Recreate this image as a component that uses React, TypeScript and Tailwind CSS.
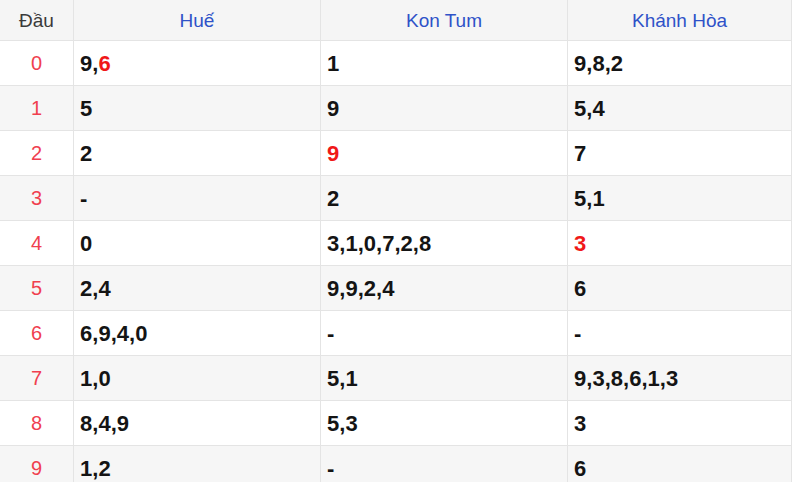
import React from "react";

type Cell = { text: string; red?: number[] };

const rows: { d: string; c: Cell[] }[] = [
  { d: "0", c: [{ text: "9,6", red: [1] }, { text: "1" }, { text: "9,8,2" }] },
  { d: "1", c: [{ text: "5" }, { text: "9" }, { text: "5,4" }] },
  { d: "2", c: [{ text: "2" }, { text: "9", red: [0] }, { text: "7" }] },
  { d: "3", c: [{ text: "-" }, { text: "2" }, { text: "5,1" }] },
  { d: "4", c: [{ text: "0" }, { text: "3,1,0,7,2,8" }, { text: "3", red: [0] }] },
  { d: "5", c: [{ text: "2,4" }, { text: "9,9,2,4" }, { text: "6" }] },
  { d: "6", c: [{ text: "6,9,4,0" }, { text: "-" }, { text: "-" }] },
  { d: "7", c: [{ text: "1,0" }, { text: "5,1" }, { text: "9,3,8,6,1,3" }] },
  { d: "8", c: [{ text: "8,4,9" }, { text: "5,3" }, { text: "3" }] },
  { d: "9", c: [{ text: "1,2" }, { text: "-" }, { text: "6" }] },
];

function renderCell(cell: Cell) {
  const parts = cell.text.split(",");
  return parts.map((p, i) => (
    <React.Fragment key={i}>
      {i > 0 && ","}
      {cell.red && cell.red.includes(i) ? <span className="text-[#f01818]">{p}</span> : p}
    </React.Fragment>
  ));
}

export default function App() {
  return (
    <div className="w-[800px] h-[482px] bg-white overflow-hidden font-['Liberation_Sans',Arial,sans-serif]">
      <div className="grid grid-cols-[74px_247px_247px_224px]">
        <div className="h-[41px] pt-[2px] bg-[#f5f5f5] border-b border-r border-[#e4e4e4] flex items-center justify-center text-[19px] text-[#3a3a3a]">Đầu</div>
        <div className="h-[41px] pt-[2px] bg-[#f5f5f5] border-b border-r border-[#e4e4e4] flex items-center justify-center text-[19px] text-[#2f52c8]">Huế</div>
        <div className="h-[41px] pt-[2px] bg-[#f5f5f5] border-b border-r border-[#e4e4e4] flex items-center justify-center text-[19px] text-[#2f52c8]">Kon Tum</div>
        <div className="h-[41px] pt-[2px] bg-[#f5f5f5] border-b border-r border-[#e4e4e4] flex items-center justify-center text-[19px] text-[#2f52c8]">Khánh Hòa</div>
        {rows.map((r, ri) => {
          const bg = ri % 2 === 0 ? "bg-white" : "bg-[#f6f6f6]";
          return (
            <React.Fragment key={r.d}>
              <div className={`${bg} h-[45px] border-b border-r border-[#e4e4e4] flex items-center justify-center text-[20px] text-[#f0404f]`}>{r.d}</div>
              {r.c.map((c, ci) => (
                <div key={ci} className={`${bg} h-[45px] border-b border-r border-[#e4e4e4] flex items-center px-[6px] text-[22px] font-bold text-[#141414]`}>
                  {renderCell(c)}
                </div>
              ))}
            </React.Fragment>
          );
        })}
      </div>
    </div>
  );
}
